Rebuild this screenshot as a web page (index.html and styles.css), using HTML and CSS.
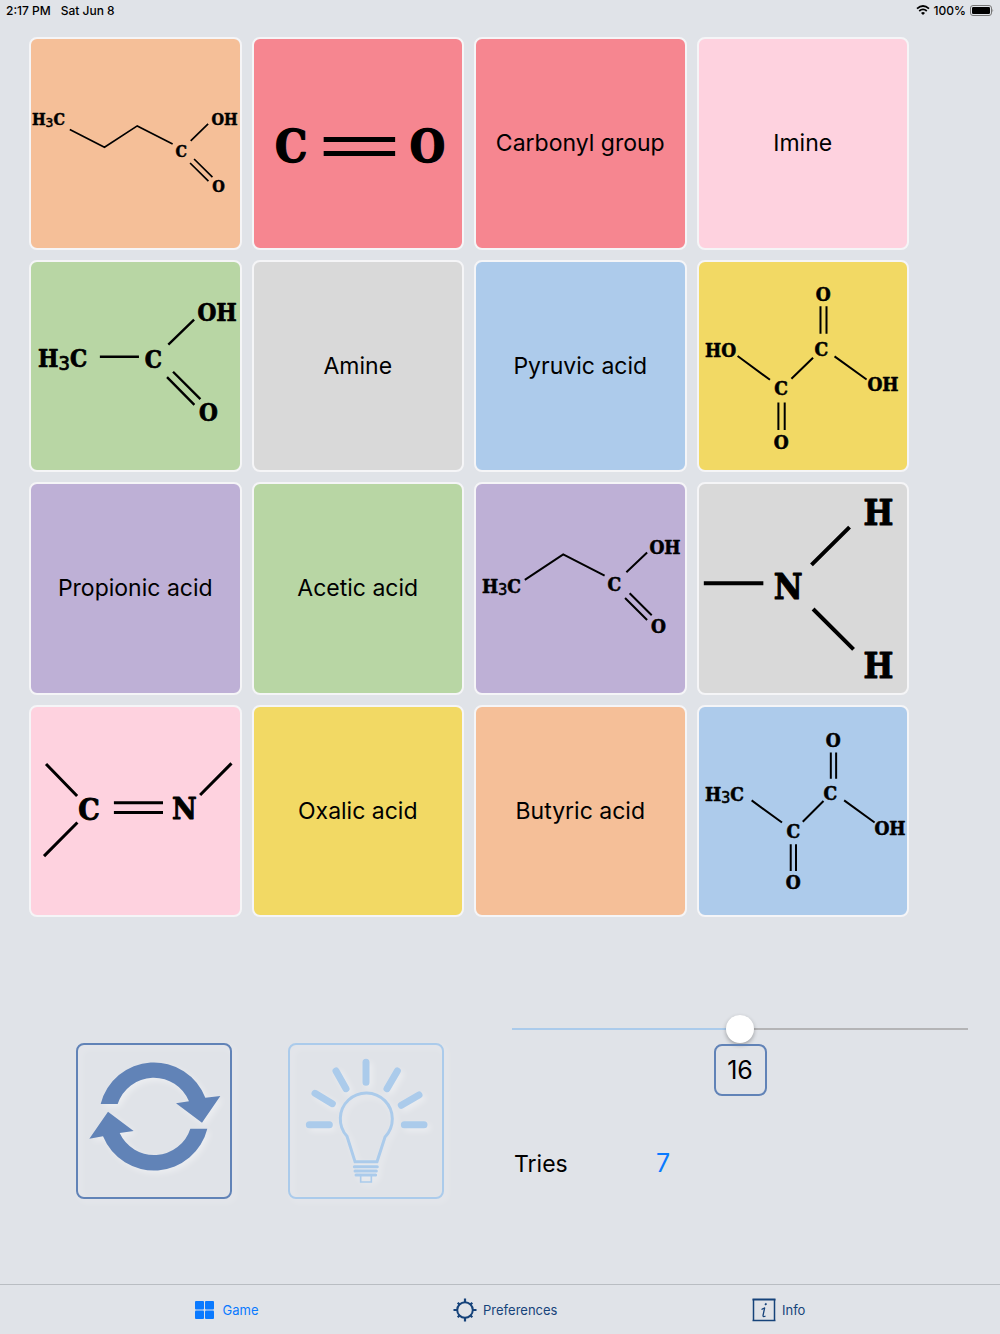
FILE: index.html
```html
<!DOCTYPE html>
<html lang="en">
<head>
<meta charset="utf-8">
<meta name="viewport" content="width=device-width, initial-scale=1">
<title>Game</title>
<link rel="stylesheet" href="styles.css">
</head>
<body>
<div class="app">
  <header class="status">
    <span class="status-time">2:17 PM</span>
    <span>Sat Jun 8</span>
    <span class="status-right">
      <svg class="wifi" viewBox="0 0 14 10" width="14" height="10" aria-hidden="true">
        <path d="M1 3.6Q7-1.6 13 3.6" fill="none" stroke="#000" stroke-width="1.8"/>
        <path d="M3.2 6Q7 2.8 10.8 6" fill="none" stroke="#000" stroke-width="1.8"/>
        <path d="M5 7.9Q7 6.2 9 7.9L7 10Z"/>
      </svg>
      <span>100%</span>
      <svg viewBox="0 0 24 11" width="24" height="11" aria-hidden="true">
        <rect x=".5" y=".5" width="21" height="10" rx="2.5" fill="none" stroke="#777"/>
        <rect x="2" y="2" width="18" height="7" rx="1.2"/>
        <path d="M22.5 3.7Q24 5.5 22.5 7.3Z" fill="#777"/>
      </svg>
    </span>
  </header>

  <main class="game">
    <section class="board" aria-label="Cards">
      <button class="card peach" type="button">
        <svg class="formula" viewBox="1 1 208 208" stroke-width="1.7">
          <text x="2" y="87" font-size="16">H<tspan class="sub" dy="2" font-size="13">3</tspan><tspan dy="-2">C</tspan></text>
          <path d="M39.7 91.3 74.3 109 107 87.7 142.3 105.7M160.3 102.7 177.7 85.7M159.7 124.7 178 142.7M163.7 120.7 182 138.7"/>
          <text class="mid" x="151" y="119" font-size="16">C</text>
          <text x="181" y="87" font-size="16">OH</text>
          <text class="mid" x="188" y="154" font-size="16">O</text>
        </svg>
      </button>
      <button class="card red" type="button">
        <svg class="formula" viewBox="1 1 208 208" stroke-width="5">
          <text class="mid" x="38" y="124" font-size="45">C</text>
          <path d="M70.5 101.3H141.8M70.5 115.3H141.8"/>
          <text class="mid" x="174" y="124" font-size="45">O</text>
        </svg>
      </button>
      <button class="card red" type="button">Carbonyl group</button>
      <button class="card pink" type="button">Imine</button>

      <button class="card green" type="button">
        <svg class="formula" viewBox="1 1 208 208" stroke-width="2.4">
          <text x="8" y="106" font-size="24">H<tspan class="sub" dy="3" font-size="19">3</tspan><tspan dy="-3">C</tspan></text>
          <path d="M69.7 95.5H108.7M138 83.5 163.7 58.5M136.7 115.8 164 143.5M142.7 110.5 170 137.8"/>
          <text class="mid" x="123" y="107" font-size="24">C</text>
          <text x="167" y="60" font-size="24">OH</text>
          <text class="mid" x="178" y="160" font-size="24">O</text>
        </svg>
      </button>
      <button class="card gray" type="button">Amine</button>
      <button class="card blue" type="button">Pyruvic acid</button>
      <button class="card yellow" type="button">
        <svg class="formula" viewBox="1 1 208 208" stroke-width="2">
          <text class="mid" x="125" y="40" font-size="19">O</text>
          <text class="mid" x="123" y="95" font-size="19">C</text>
          <text x="7" y="96" font-size="19">HO</text>
          <text class="mid" x="83" y="134" font-size="19">C</text>
          <text x="169" y="130" font-size="19">OH</text>
          <text class="mid" x="83" y="188" font-size="19">O</text>
          <path d="M122.2 45.2V72.5M128.2 45.2V72.5M39.5 94.8 71.8 118.5M93.2 117.5 114.8 96.5M136.2 95.2 168.2 118.2M80.2 141.2V168.5M86.5 141.2V168.5"/>
        </svg>
      </button>

      <button class="card purple" type="button">Propionic acid</button>
      <button class="card green" type="button">Acetic acid</button>
      <button class="card purple" type="button">
        <svg class="formula" viewBox="1 1 208 208" stroke-width="2">
          <text x="7" y="110" font-size="19">H<tspan class="sub" dy="2" font-size="15">3</tspan><tspan dy="-2">C</tspan></text>
          <path d="M49.7 96.7 88 71.3 129.3 92.3M151 89 171.7 69.3M149.7 114.7 171.7 136.7M154.3 110 176.3 132"/>
          <text class="mid" x="139" y="108" font-size="19">C</text>
          <text x="174" y="71" font-size="19">OH</text>
          <text class="mid" x="183" y="150" font-size="19">O</text>
        </svg>
      </button>
      <button class="card gray" type="button">
        <svg class="formula" viewBox="1 1 208 208" stroke-width="4">
          <text class="mid" x="180" y="42" font-size="35">H</text>
          <text class="mid" x="90" y="116" font-size="35">N</text>
          <text class="mid" x="180" y="195" font-size="35">H</text>
          <path d="M5.8 100H65.2M113.2 81.7 151.2 44M114.8 125.7 155.2 166"/>
        </svg>
      </button>

      <button class="card pink" type="button">
        <svg class="formula" viewBox="1 1 208 208" stroke-width="3">
          <path d="M16 57.8 47 89.8M14 149.8 47.3 116.2M83.7 96.5H132.7M83.7 106.2H132.7M169.7 88.8 201 57.2"/>
          <text class="mid" x="59" y="114" font-size="30">C</text>
          <text class="mid" x="154" y="113" font-size="30">N</text>
        </svg>
      </button>
      <button class="card yellow" type="button">Oxalic acid</button>
      <button class="card peach" type="button">Butyric acid</button>
      <button class="card blue" type="button">
        <svg class="formula" viewBox="1 1 208 208" stroke-width="2">
          <text class="mid" x="135" y="41" font-size="19">O</text>
          <text class="mid" x="132" y="94" font-size="19">C</text>
          <text x="7" y="95" font-size="19">H<tspan class="sub" dy="2" font-size="15">3</tspan><tspan dy="-2">C</tspan></text>
          <text class="mid" x="95" y="132" font-size="19">C</text>
          <text x="176" y="129" font-size="19">OH</text>
          <text class="mid" x="95" y="183" font-size="19">O</text>
          <path d="M132.5 46.5V72.5M137.8 46.5V72.5M53.5 94.2 83.8 116.2M104.5 115.5 125.2 94.8M145.8 94.2 176.2 116.2M92.5 137.8V164.5M97.8 137.8V164.5"/>
        </svg>
      </button>
    </section>

    <section class="controls" aria-label="Controls">
      <button class="tool restart" type="button" aria-label="Restart">
        <svg viewBox="24 30 456 456" fill="currentColor" aria-hidden="true">
          <path d="M92 207A165 165 0 0 1 406 188L451 183 396 263 318 205 357 199A114 114 0 0 0 143 207Z"/>
          <path d="M412 281A165 165 0 0 1 99 304L58 311 114 230 191 288 149 294A114 114 0 0 0 361 281Z"/>
        </svg>
      </button>
      <button class="tool hint" type="button" aria-label="Hint">
        <svg viewBox="30 30 456 456" fill="none" stroke="currentColor" stroke-linecap="round" aria-hidden="true">
          <path stroke-width="21" d="M258 82V142M168 108 198 161M352 108 321 161M105 175 157 206M417 180 364 211M88 269H148M373 269H432"/>
          <path stroke-width="9" d="M225 380 201 304A78 78 0 1 1 315 306L291 380ZM223 395H292M225 408H289M228 420H287"/>
          <path stroke-width="5" d="M242 422V441H274V422"/>
        </svg>
      </button>
      <div class="settings">
        <input class="slider" id="cards" type="range" min="0" max="32" value="16" aria-label="Number of cards">
        <output class="count" for="cards">16</output>
        <div class="tries"><span>Tries</span><span class="tries-value">7</span></div>
      </div>
    </section>
  </main>

  <nav class="tabs">
    <a class="tab active" href="#game">
      <svg width="19" height="18" viewBox="0 0 19 18" fill="currentColor" aria-hidden="true">
        <rect width="9" height="8.5" rx="1"/><rect x="10" width="9" height="8.5" rx="1"/>
        <rect y="9.5" width="9" height="8.5" rx="1"/><rect x="10" y="9.5" width="9" height="8.5" rx="1"/>
      </svg>
      Game
    </a>
    <a class="tab" href="#preferences">
      <svg width="24" height="24" viewBox="0 0 24 24" fill="none" stroke="currentColor" aria-hidden="true">
        <circle cx="12" cy="12" r="7.8" stroke-width="2"/>
        <path stroke-width="2.2" d="M12 .5V4M12 20V23.5M.5 12H4M20 12H23.5M4.700 4.700 6.800 6.800M17.200 17.200 19.300 19.300M4.700 19.300 6.800 17.200M17.200 6.800 19.300 4.700"/>
      </svg>
      Preferences
    </a>
    <a class="tab" href="#info">
      <svg width="24" height="24" viewBox="0 0 24 24" fill="none" stroke="currentColor" aria-hidden="true">
        <path stroke-width="1.5" d="M1.500 1V23M22.500 1V23M.5 22.500H23.500"/>
        <path stroke-width="2" d="M.5 1.500H23.500"/>
        <path stroke-width="1.3" d="M9.500 11.500Q12 10.500 12.700 9.500L11 17.500Q11 19.500 13.500 18"/>
        <path stroke-width="1.7" d="M13 6.800 14.500 5.500"/>
      </svg>
      Info
    </a>
  </nav>
</div>
</body>
</html>
```

FILE: styles.css
```css
* {
  box-sizing: border-box;
}

body {
  margin: 0;
  background: #e0e3e8;
  color: #000;
  font-family: Inter, "Liberation Sans", sans-serif;
}

button {
  font: inherit;
  color: inherit;
  padding: 0;
  cursor: pointer;
}

.app {
  min-height: 100vh;
  display: flex;
  flex-direction: column;
}

.status {
  display: flex;
  align-items: center;
  gap: 10px;
  height: 20px;
  padding: 0 6px;
  font-size: 12px;
  font-weight: 500;
}

.status-right {
  display: flex;
  align-items: center;
  gap: 4px;
  margin-left: auto;
}

.game {
  flex: 1;
}

.board {
  display: grid;
  grid-template-columns: repeat(4, 1fr);
  gap: 10px;
  padding: 17px 91px 0 29px;
}

.card {
  display: flex;
  align-items: center;
  justify-content: center;
  aspect-ratio: 1;
  min-width: 0;
  overflow: hidden;
  border: 2px solid #f5f5f7;
  border-radius: 8px;
  font-size: 23px;
}

.peach { background: #f5bf98; }
.red { background: #f68690; }
.pink { background: #fed2df; }
.green { background: #b8d6a4; }
.gray { background: #d9d9d9; }
.blue { background: #adcbeb; }
.yellow { background: #f2d964; }
.purple { background: #beb0d6; }

.formula {
  display: block;
  width: 100%;
  font-family: "DejaVu Serif Condensed", "DejaVu Serif", serif;
  font-weight: 700;
}

.formula path {
  fill: none;
  stroke: #000;
}

.formula text {
  stroke: #000;
  stroke-width: 0.03em;
  stroke-linejoin: round;
}

.formula .mid {
  text-anchor: middle;
}

.formula .sub {
  font-family: "DejaVu Sans Mono", monospace;
  font-weight: 400;
}

.controls {
  display: flex;
  align-items: flex-start;
  padding: 98px 32px 0 76px;
}

.tool {
  flex: none;
  width: 156px;
  height: 156px;
  margin-top: 28px;
  border: 2px solid currentColor;
  border-radius: 8px;
  background: none;
  filter: drop-shadow(3px 3px 3px rgba(255, 255, 255, 0.4));
}

.tool svg {
  display: block;
  width: 100%;
}

.restart {
  color: #6183b7;
}

.hint {
  margin-left: 56px;
  color: #abcbeb;
}

.settings {
  flex: 1;
  display: flex;
  flex-direction: column;
  margin-left: 68px;
}

.slider {
  appearance: none;
  width: 100%;
  height: 28px;
  margin: 0 0 1px;
  background: linear-gradient(to right, #abcbeb 50%, #b4b4b6 50%) center / 100% 2px no-repeat;
}

.slider::-webkit-slider-thumb {
  appearance: none;
  width: 28px;
  height: 28px;
  border-radius: 50%;
  background: #fff;
  box-shadow: 0 2px 4px rgba(0, 0, 0, 0.3);
}

.count {
  align-self: center;
  width: 53px;
  border: 2px solid #6183b7;
  border-radius: 8px;
  font-size: 25px;
  line-height: 48px;
  text-align: center;
}

.tries {
  display: grid;
  grid-template-columns: 142px 1fr;
  align-items: baseline;
  margin-top: 51px;
  padding-left: 2px;
  font-size: 23px;
  line-height: 32px;
}

.tries-value {
  color: #0a7aff;
  font-size: 25px;
}

.tabs {
  display: flex;
  justify-content: space-evenly;
  height: 50px;
  border-top: 1px solid #b9bdc2;
}

.tab {
  display: flex;
  align-items: center;
  gap: 6px;
  color: #16437a;
  font-size: 13px;
  text-decoration: none;
}

.tab.active {
  gap: 9px;
  color: #0a7aff;
}
```
